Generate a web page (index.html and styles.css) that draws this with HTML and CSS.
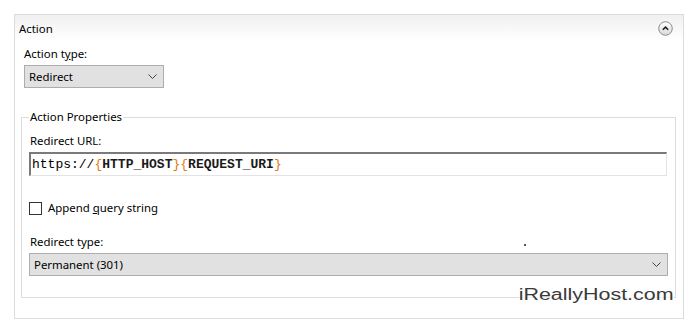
FILE: index.html
```html
<!DOCTYPE html>
<html lang="en">

<head>
    <meta charset="UTF-8">
    <title>Action</title>
    <link rel="stylesheet" href="styles.css">
</head>

<body>
    <div class="panel">
        <div class="panel-header">
            <span class="panel-title">Action</span>
            <span class="collapse-btn">
                <svg width="15" height="15" viewBox="0 0 15 15">
                    <defs>
                        <linearGradient id="btn-grad" x1="0" y1="0" x2="0" y2="1">
                            <stop offset="0" stop-color="#ffffff"/>
                            <stop offset="1" stop-color="#d8d8d8"/>
                        </linearGradient>
                    </defs>
                    <circle cx="7.5" cy="7.5" r="6.8" fill="url(#btn-grad)" stroke="#8c8c8c" stroke-width="1"/>
                    <path d="M4.8 8.8 L7.5 6.1 L10.2 8.8" fill="none" stroke="#222" stroke-width="1.6"/>
                </svg>
            </span>
        </div>

        <div class="panel-body">
            <div class="field-label">Action t<u>y</u>pe:</div>
            <div class="dropdown small">
                <span>Redirect</span>
                <svg class="chevron" width="9" height="5" viewBox="0 0 9 5"><path d="M0.5 0.5 L4.5 4.5 L8.5 0.5" fill="none" stroke="#444" stroke-width="1"/></svg>
            </div>

            <fieldset class="props">
                <legend>Action Properties</legend>
                <div class="field-label">Redirect URL:</div>
                <div class="url-input">https://<b class="brace">{</b><b>HTTP_HOST</b><b class="brace">}</b><b class="brace">{</b><b>REQUEST_URI</b><b class="brace">}</b></div>

                <label class="check-row">
                    <span class="checkbox"></span>
                    <span>Append <u>q</u>uery string</span>
                </label>

                <div class="field-label">Redirect type:</div>
                <div class="dropdown wide">
                    <span>Permanent (301)</span>
                    <svg class="chevron" width="9" height="5" viewBox="0 0 9 5"><path d="M0.5 0.5 L4.5 4.5 L8.5 0.5" fill="none" stroke="#444" stroke-width="1"/></svg>
                </div>
            </fieldset>
        </div>

        <span class="speck"></span>
        <span class="watermark">iReallyHost.com</span>
    </div>
</body>

</html>
```

FILE: styles.css
```css
body {
    margin: 0;
    background: #fff;
    font-family: "Noto Sans", "Open Sans", sans-serif;
    font-size: 11.4px;
    color: #000;
}

.panel {
    position: relative;
    margin: 14px 0 0 14px;
    width: 668px;
    height: 303px;
    border: 1px solid #dcdcdc;
}

.panel-header {
    display: flex;
    align-items: center;
    justify-content: space-between;
    height: 26px;
    padding: 0 10px 0 4px;
    background: linear-gradient(#f0f0f0, #ffffff);
}

.panel-title {
    line-height: 16px;
    margin-top: 2px;
}

.collapse-btn {
    display: flex;
    margin-top: 1px;
}

.panel-body {
    padding: 5px 0 0 9px;
}

.field-label {
    line-height: 16px;
    margin-bottom: 3px;
}

.dropdown {
    display: flex;
    align-items: center;
    justify-content: space-between;
    box-sizing: border-box;
    height: 23px;
    padding: 0 6px 0 4px;
    background: #e1e1e1;
    border: 1px solid #adadad;
}

.dropdown.small {
    width: 140px;
}

.dropdown.wide {
    width: 639px;
}

.chevron {
    display: block;
}

.props {
    margin: 22px 0 0 -3px;
    padding: 9px 7px 21px 7px;
    width: 639px;
    border: 1px solid #dcdcdc;
}

.props legend {
    padding: 0 1px;
    line-height: 14px;
}

.props .field-label {
    padding-left: 1px;
}

.url-input {
    box-sizing: border-box;
    height: 24px;
    width: 638px;
    margin-top: 1px;
    padding: 2px 0 0 1px;
    border-style: solid;
    border-width: 2px 1px 1px 2px;
    border-color: #7a7a7a #e3e3e3 #e3e3e3 #7a7a7a;
    font-family: "Liberation Mono", "Courier New", monospace;
    font-size: 13px;
    line-height: 18px;
    white-space: nowrap;
}

.url-input b {
    color: #1a1a1a;
}

.url-input .brace {
    font-weight: normal;
    color: #e07a10;
}

.check-row {
    display: flex;
    align-items: center;
    gap: 6px;
    margin: 24px 0 18px 0;
    line-height: 16px;
}

.checkbox {
    box-sizing: border-box;
    width: 13px;
    height: 13px;
    border: 1px solid #333;
    background: #fff;
}

.speck {
    position: absolute;
    left: 509px;
    top: 229px;
    width: 2px;
    height: 2px;
    background: #555;
}

.watermark {
    position: absolute;
    right: 9px;
    bottom: 15px;
    font-family: "Liberation Sans", Arial, sans-serif;
    font-size: 16px;
    line-height: 16px;
    color: #3a3a3a;
    background: rgba(255, 255, 255, 0.6);
    transform: scaleX(1.34);
    transform-origin: right bottom;
}
```
